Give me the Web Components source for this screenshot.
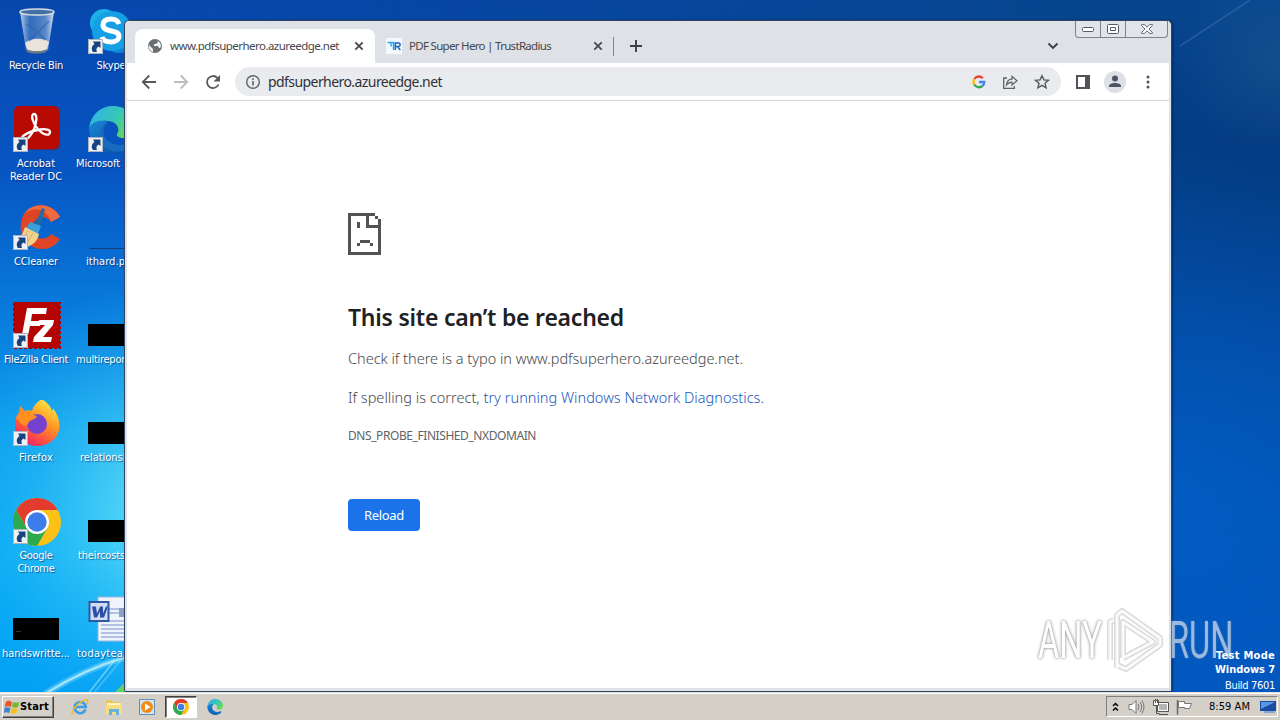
<!DOCTYPE html>
<html lang="en">
<head>
<meta charset="utf-8">
<title>Desktop</title>
<style>
  html, body { margin: 0; width: 1280px; height: 720px; overflow: hidden; }
</style>
</head>
<body>
<desk-top></desk-top>

<script>
const shortcut = `
  <svg class="arrow" width="15" height="15" viewBox="0 0 15 15">
    <path d="M0 0h15v15H0z" fill="#eef0f2"/>
    <path d="M.5.5h14v14H.5z" fill="none" stroke="#aab4c0"/>
    <path d="M5 2.500h7.500V9L10.500 7.500c-2 1-2.700 3-1.500 5.500H5c-2-3-1.500-6 1.500-8z" fill="#17427f"/>
  </svg>`;

const chromeBall = `
  <circle cx="24" cy="24" r="24" fill="#fbc116"/>
  <path d="M3.200 12A24 24 0 0 1 44.800 12H24L13.600 30z" fill="#e33b2e"/>
  <path d="M3.200 12A24 24 0 0 0 24 48L34.400 30 24 36 13.600 30z" fill="#2da94f"/>
  <circle cx="24" cy="24" r="12" fill="#fff"/>
  <circle cx="24" cy="24" r="9.700" fill="#3c7de9"/>`;

const edgeBall = `
  <defs>
    <linearGradient id="ea" x1="0" y1="0" x2="1" y2=".5"><stop offset="0" stop-color="#2fb2ee"/><stop offset=".6" stop-color="#35c6b8"/><stop offset="1" stop-color="#69d85a"/></linearGradient>
    <linearGradient id="eb" x1="0" y1="0" x2="1" y2="1"><stop offset="0" stop-color="#1887d4"/><stop offset="1" stop-color="#0c4ba1"/></linearGradient>
  </defs>
  <path d="M1 22C3 8 13 0 25 0c13 0 23 9 23 20 0 8-6 12-12 12-5 0-8-2-7-4 3-3 2-12-9-13C10 14 4 17 1 22z" fill="url(#ea)"/>
  <path d="M1 22c4-7 13-9 19-6-7 3-9 10-7 17 3 9 13 13 22 8 4-2 7-2 5 1A24 24 0 0 1 1 22z" fill="url(#eb)"/>
  <path d="M20 16c-6 5-6 13-1 18 6 6 14 6 21 3 3-1 4 1 2 4-8 7-21 6-27-2-6-7-4-19 5-23z" fill="#176cc0"/>`;

// Every drawing is kept here by name, used through <pic-ture name="...">
const pictures = {
  recycle: [48, 48, `
    <defs><linearGradient id="a"><stop offset="0" stop-color="#dfe9f2" stop-opacity=".85"/><stop offset=".3" stop-color="#5f8fc8" stop-opacity=".5"/><stop offset=".75" stop-color="#8fb2da" stop-opacity=".6"/><stop offset="1" stop-color="#eef3f8" stop-opacity=".9"/></linearGradient></defs>
    <path d="M7 4l6 38c2 3 19 3 22 0l6-38z" fill="url(#a)"/>
    <path d="M12 35c5-5 18-6 24-1l-2 7c-3 3-18 3-20 0z" fill="#e9e4da"/>
    <path d="M13 41c4 3 17 3 21 0l-1 3c-4 2-15 2-19 0z" fill="#6f7a80"/>
    <path d="M13 16l12 8-9 9M36 13l-11 11 7 8" fill="none" stroke="#2d5fae" stroke-width="2" opacity=".5"/>
    <ellipse cx="24" cy="4" rx="17" ry="3" fill="#426fa5" stroke="#d5dbe0" stroke-width="1.500"/>`],
  skype: [48, 48, `
    <circle cx="16" cy="15" r="14" fill="#1bb0e8"/><circle cx="31" cy="29" r="16" fill="#0c86d8"/>
    <circle cx="24" cy="23" r="20" fill="#159fe4"/>
    <path d="M31 16c-1-3-3-5-8-5s-8 2-8 6c0 8 16 4 16 11 0 4-4 6-8 6-5 0-8-2-9-5" fill="none" stroke="#fff" stroke-width="5"/>`],
  acrobat: [48, 48, `
    <rect x="2" y="1" width="45" height="43" rx="5" fill="#8e0d05" opacity=".5"/>
    <rect x="1" y="0" width="45" height="43" rx="5" fill="#b60a02"/>
    <path d="M10 33c5 3 12-9 13-17 1-5 0-8-2-8-4 0-1 10 4 15 6 7 12 7 12 3 0-5-17-3-27 4-1 1-1 2 0 3z" fill="none" stroke="#fff" stroke-width="2.300"/>`],
  edge: [48, 48, edgeBall],
  ccleaner: [48, 48, `
    <path d="M47 13C40-1 20-3 11 10 5 20 7 34 17 41c9 7 23 5 30-6l-9-5c-6 8-17 5-18-5-1-12 12-16 18-7z" fill="#e04427"/>
    <path d="M47 13C40-1 20-3 11 10c10-8 22-6 27 8z" fill="#f06a40"/>
    <path d="M29 4l3 1-5 17-5-2z" fill="#276a9f"/><path d="M17 18l11 4-3 8-12-6z" fill="#3b9fd8"/>
    <path d="M12 23l14 7c-1 7-7 12-13 13L1 36c7-2 9-7 11-13z" fill="#f2d18c"/>
    <path d="M15 27l-7 12M20 29l-7 12" stroke="#d8b268"/>`],
  filezilla: [48, 48, `
    <rect x="1" y="0" width="46" height="46" fill="#b50404" stroke="#a00" stroke-width="2" stroke-dasharray="3 2"/>
    <path d="M14 6h20l-1 6H19l-1 7h10l-1 5H17l-3 14H8z" fill="#fff"/>
    <path d="M26 18h15l-1 5-10 12h9l-1 5H20l1-5 11-12h-7z" fill="#fff"/>`],
  firefox: [48, 48, `
    <defs><linearGradient id="f" x1=".8" y1="0" x2=".2" y2="1"><stop offset="0" stop-color="#fff14a"/><stop offset=".4" stop-color="#ff9a22"/><stop offset=".75" stop-color="#ff4a46"/><stop offset="1" stop-color="#e3187a"/></linearGradient></defs>
    <path d="M29 0c6 4 9 8 10 12 1-1 1-2 1-3 9 12 8 25 0 32-9 8-23 8-31 0C0 33 1 21 6 13l1-6 5 5c2-1 5-1 7 0 1-5 5-9 10-12z" fill="url(#f)" transform="translate(0 -1)"/>
    <circle cx="24" cy="24" r="10" fill="#7442ce"/>
    <path d="M3 18c2-5 8-8 13-6 1 2 4 3 8 4-1 4-8 3-9 8-3 4-7 0-12-6z" fill="#ff901f"/>`],
  chrome: [48, 48, chromeBall],
  thumb: [48, 48, `<path d="M0 22h46v22H0z"/>`],
  thumbmark: [48, 48, `<path d="M0 22h46v22H0z"/><path d="M3 35.500h5" stroke="#333"/>`],
  hair: [48, 48, `<path d="M2 44.500h46" stroke="#123f78"/>`],
  word: [48, 48, `
    <path d="M10 1h38v44H10z" fill="#eef3fc"/><path d="M10 1h38v44H10z" fill="none" stroke="#9fb5dd"/>
    <path d="M20 13h28M20 17h28M13 25h35M13 29h35M13 33h35M13 37h35M13 41h35" stroke="#7590cd"/>
    <path d="M31 12h17v9H31z" fill="#8d9fc4"/>
    <path d="M1.500 6h19v19h-19z" fill="#d2ddf4" stroke="#3156a4" stroke-width="2"/>
    <path d="M4 10.500h4l1 7 3-7h3v7l3-7h2l-4 11h-4v-6l-3 6H6z" fill="#2b4fa6"/>`],
  globe: [16, 16, `<circle cx="8" cy="8" r="7" fill="#6b6e72"/>
    <path d="M9 2c1 0 2 1 2 2L9 6H7v2h4l1 2h1c2-2 1-6-4-8zM2 7l4 4v3C3 13 1 10 2 7z" fill="#f2f3f4"/>`],
  trust: [16, 16, `<path d="M0 0h16v16H0z" fill="#f4f9fe"/>
    <path d="M1.500 4.500H7.500v7.500M5 4.500v4" fill="none" stroke="#29a6ee" stroke-width="1.500"/>
    <path d="M9.300 12V5h3.200q1.700 0 1.700 1.700t-1.700 1.700H9.500M11.800 9l2.500 3" fill="none" stroke="#1766c5" stroke-width="1.500"/>`],
  close: [10, 10, `<path d="M1.300 1.300l7.400 7.400M8.700 1.300L1.300 8.700" stroke="#46494d" stroke-width="1.800"/>`],
  plus: [14, 14, `<path d="M7 1v12M1 7h12" stroke="#3c4043" stroke-width="1.900"/>`],
  down: [12, 8, `<path d="M1.500 1.500L6 6l4.500-4.500" fill="none" stroke="#3c4043" stroke-width="1.900"/>`],
  back: [16, 16, `<path d="M15 8H2M8.300 1.500L1.800 8l6.500 6.500" fill="none" stroke="#55585c" stroke-width="1.800"/>`],
  forward: [16, 16, `<path d="M1 8h13M7.700 1.500L14.200 8l-6.500 6.500" fill="none" stroke="#bbbdc0" stroke-width="1.800"/>`],
  reload: [16, 16, `<path d="M13.500 10.500A6 6 0 1 1 12.300 3.800L14 5.500" fill="none" stroke="#55585c" stroke-width="1.800"/><path d="M15 1v6.500H8.500z" fill="#55585c"/>`],
  info: [16, 16, `<circle cx="8" cy="8" r="6.300" fill="none" stroke="#5f6368" stroke-width="1.400"/><path d="M8 7v4.500M8 4.300V6" stroke="#5f6368" stroke-width="1.600"/>`],
  google: [14, 14, `<g fill="none" stroke-width="2.300"><path d="M2.400 4A5.300 5.300 0 0 1 10.800 3.200" stroke="#ea4335"/><path d="M2.300 9.600a5.300 5.300 0 0 1 0-5.500" stroke="#fbbc05"/><path d="M2.300 9.500A5.300 5.300 0 0 0 10.600 10.800" stroke="#34a853"/><path d="M7 7h5.300a5.300 5.300 0 0 1-1.800 3.900" stroke="#4285f4"/></g>`],
  share: [16, 16, `<path d="M5 4H1.700v10.300h10.600V12" fill="none" stroke="#5f6368" stroke-width="1.300"/><path d="M4.500 11C5 7 7.500 5.200 10 5.200V2.300l5 4.400-5 4.300V8.200C7.500 8.200 6 9 4.500 11z" fill="none" stroke="#5f6368" stroke-width="1.200"/>`],
  star: [16, 16, `<path d="M8 1.700l1.900 4.200 4.600.4-3.500 3 1.100 4.500L8 11.400l-4.100 2.400L5 9.300l-3.500-3 4.600-.4z" fill="none" stroke="#55585c" stroke-width="1.400"/>`],
  panel: [14, 14, `<path d="M1 1h12v12H1z" fill="none" stroke="#505357" stroke-width="2"/><path d="M9 0h5v14H9z" fill="#505357"/>`],
  person: [22, 22, `<circle cx="11" cy="11" r="11" fill="#dde0e5"/><circle cx="11" cy="7.500" r="3" fill="#4d5565"/><path d="M5 16v-1c0-4 12-4 12 0v1z" fill="#4d5565"/>`],
  dots: [4, 14, `<circle cx="2" cy="2" r="1.500" fill="#505357"/><circle cx="2" cy="7" r="1.500" fill="#505357"/><circle cx="2" cy="12" r="1.500" fill="#505357"/>`],
  sad: [33, 42, `<path shape-rendering="crispEdges" fill="#535353" d="M0 0h27v3H3v36h27V6h3v36H0zM18 0h3v15h-3zM21 12h12v3H21zM27 3h3v3h-3zM9 9h3v6H9zM12 27h10v3H12zM9 30h3v3H9zM22 30h3v3h-3z"/>`],
  min: [12, 6, `<rect x=".5" y="1.500" width="11" height="4" rx="1" fill="#fff" stroke="#555b66"/>`],
  max: [12, 10, `<rect x=".5" y=".5" width="11" height="9" rx="1" fill="#fff" stroke="#555b66"/><path d="M3.500 3.500h5v3h-5z" fill="none" stroke="#555b66"/>`],
  quit: [12, 10, `<path d="M.6.600h3L6 3.200 8.400.600h3v1L8 5l3.400 3.400v1h-3L6 6.800 3.600 9.400h-3v-1L4 5 .6 1.600z" fill="#fff" stroke="#555b66" stroke-width=".9"/>`],
  flagwin: [16, 16, `<path d="M2 3c2-2 4-1 6 0L7 8C5 7 3 7 .5 8z" fill="#e8552b"/><path d="M9 3c2 1 4 1 6.500 0L14 8c-2 1-4 1-6 0z" fill="#76b82c"/><path d="M.5 9c2-1 4-1 6 0l-1.500 5c-2-1-4-1-5 0z" fill="#3b84cf"/><path d="M7.500 9c2 1 4 1 6 0l-1 5c-3 1-5 1-6.500 0z" fill="#f6c022"/>`],
  ie: [18, 18, `<path d="M14.500 11.500A5.600 5.600 0 1 1 14.800 9H5" fill="none" stroke="#3a9fe4" stroke-width="2.600"/><path d="M1.500 16.500C-1 12 12 0 16.500 2c1 .8 0 3-1 4" fill="none" stroke="#ecba38" stroke-width="1.500"/>`],
  folder: [18, 18, `<path d="M1 2h6l1 2h8v12H1z" fill="#e8c75e"/><path d="M2 5h14v5H2z" fill="#fff4ba"/><path d="M1 7h16v9H1z" fill="#f6dc83"/><path d="M4 17v-6h10v6h-3v-3H7v3z" fill="#65b4df"/>`],
  media: [16, 16, `<path d="M.5.500h15v15H.5z" fill="#d3e4f2" stroke="#5f8fb9"/><circle cx="8" cy="8" r="6" fill="#f28c16"/><path d="M6 4.500l5.500 3.500L6 11.500z" fill="#fff"/>`],
  speaker: [18, 16, `<path d="M1 5.500h3l4-4v13l-4-4H1z" fill="#fff" stroke="#777"/><path d="M10 5q2 3 0 6M12 3q3.500 5 0 10M14 1.500q4 6.500 0 13" fill="none" stroke="#777"/>`],
  network: [16, 16, `<path d="M4.500 3.500h11v9h-11z" fill="#b5b5b5" stroke="#555"/><path d="M5.500 4.500h9v7h-9z" fill="none" stroke="#fff"/><path d="M6 15.500h9" stroke="#555"/><path d="M.5 1.500h5v5h-5z" fill="#fff" stroke="#555"/><path d="M2.500 0v4M4.500 0v4M3.500 7v7.500h3" stroke="#555" fill="none"/>`],
  flag: [17, 16, `<path d="M1.500 1v14.500" stroke="#666" stroke-width="1.500"/><path d="M2.500 2.500h6v2h7l-2 5h-5v-1h-6z" fill="#fff" stroke="#777"/>`],
  chevrons: [7, 10, `<path d="M1 4l2.500-2.500L6 4M1 8.500L3.500 6 6 8.500" fill="none" stroke="#000" stroke-width="1.500"/>`],
  screen: [16, 13, `<path d="M0 1h16v10H0z" fill="#1b4ca3"/><path d="M1 2h14L1 9z" fill="#5796e4"/><path d="M4 12h11" stroke="#8aa6d4" stroke-width="2"/>`],
  play: [60, 66, `
    <g fill="none" stroke-linejoin="round"><path d="M4 52V14l4-2M11 60V7l5-4 38 27v7L20 61l-9-4M17 50V14l30 20-30 16M20 61l34-24" stroke="#8c8c8c" stroke-opacity=".32" stroke-width="6"/>
    <path d="M4 52V14l4-2M11 60V7l5-4 38 27v7L20 61l-9-4M17 50V14l30 20-30 16" stroke="#fff" stroke-opacity=".85" stroke-width="3"/></g>`],
};

function define(tag, render) {
  customElements.define(tag, class extends HTMLElement {
    connectedCallback() {
      if (this.shadowRoot) return;
      const template = document.createElement("template");
      template.innerHTML = render(this);
      this.attachShadow({ mode: "open" }).append(template.content.cloneNode(true));
    }
  });
}

// Spaces its letters so that the line is as wide as the width attribute says
customElements.define("fit-text", class extends HTMLElement {
  connectedCallback() {
    if (this.shadowRoot) return;
    this.attachShadow({ mode: "open" }).innerHTML =
      `<style>:host { display: inline-block; white-space: nowrap; text-indent: 0; }</style><slot></slot>`;
    const width = Number(this.getAttribute("width"));
    const gap = width - this.getBoundingClientRect().width;
    this.style.letterSpacing = gap / this.textContent.length + "px";
  }
});

define("pic-ture", el => {
  const [w, h, body] = pictures[el.getAttribute("name")];
  const size = el.getAttribute("size");
  return `
    <style>:host { display: block; flex: none; } svg { display: block; }</style>
    <svg width="${size || w}" height="${size || h}" viewBox="0 0 ${w} ${h}">${body}</svg>`;
});

define("desktop-icon", el => `
  <style>
    :host { position: absolute; width: 74px; color: #fff; font: 11px/13px "DejaVu Sans Condensed", "DejaVu Sans", sans-serif; font-stretch: condensed; text-align: center; text-shadow: 1px 1px 1px rgba(0, 30, 90, .6); }
    :host([indent]) .label { text-align: left; padding-left: ${el.getAttribute("indent") || 0}px; }
    .box { position: relative; width: 48px; height: 48px; margin: 0 12px 3px 14px; }
    .arrow { position: absolute; left: 0; bottom: 2px; }
  </style>
  <div class="box">
    <pic-ture name="${el.getAttribute("icon")}"></pic-ture>
    ${el.hasAttribute("link") ? shortcut : ""}
  </div>
  <div class="label"><slot></slot></div>`);

define("wall-paper", () => `
  <style>:host { position: absolute; inset: 0 0 28px; } svg { display: block; }</style>
  <svg width="1280" height="692">
    <defs>
      <linearGradient id="l" x1="0" y1="0" x2="0" y2="1">
        <stop offset="0" stop-color="#0747ad"/><stop offset=".25" stop-color="#0756c4"/><stop offset=".45" stop-color="#087bdc"/>
        <stop offset=".62" stop-color="#0c9eed"/><stop offset=".8" stop-color="#08aaf4"/><stop offset="1" stop-color="#04a0f4"/>
      </linearGradient>
      <linearGradient id="r" x1="0" y1="0" x2="0" y2="1">
        <stop offset="0" stop-color="#07468f"/><stop offset=".2" stop-color="#033f87"/><stop offset=".45" stop-color="#034a9f"/>
        <stop offset=".75" stop-color="#0355b6"/><stop offset="1" stop-color="#0357bd"/>
      </linearGradient>
      <linearGradient id="m" x1="0" x2="1"><stop offset=".1" stop-color="#fff"/><stop offset=".85" stop-color="#000"/></linearGradient>
      <mask id="k"><path d="M0 0h1280v692H0z" fill="url(#m)"/></mask>
      <radialGradient id="g" gradientUnits="userSpaceOnUse" cx="175" cy="510" r="230"><stop offset="0" stop-color="#7cf0f8" stop-opacity=".9"/><stop offset="1" stop-color="#20b8f8" stop-opacity="0"/></radialGradient>
      <radialGradient id="b" gradientUnits="userSpaceOnUse" cx="1172" cy="500" r="330"><stop offset="0" stop-color="#0064d0" stop-opacity=".5"/><stop offset="1" stop-color="#0058c0" stop-opacity="0"/></radialGradient>
      <radialGradient id="n" gradientUnits="userSpaceOnUse" cx="1290" cy="150" r="200"><stop offset="0" stop-color="#002a68" stop-opacity=".2"/><stop offset="1" stop-color="#002a68" stop-opacity="0"/></radialGradient>
      <radialGradient id="t"><stop offset="0" stop-color="#286295" stop-opacity=".4"/><stop offset="1" stop-color="#286295" stop-opacity="0"/></radialGradient>
    </defs>
    <path d="M0 0h1280v692H0z" fill="url(#r)"/>
    <path d="M0 0h1280v692H0z" fill="url(#l)" mask="url(#k)"/>
    <path d="M0 200h400v492H0z" fill="url(#g)"/>
    <path d="M1100 0h180v692h-180z" fill="url(#b)"/>
    <path d="M1100 0h180v692h-180z" fill="url(#n)"/>
    <circle cx="1280" cy="60" r="100" fill="url(#t)"/>
    <path d="M1180 46L1250 0" stroke="#5f91bd" stroke-width="1.500" opacity=".3"/>
    <g fill="none" stroke="#c9f6ff">
      <path d="M45 694Q82 670 126 657" stroke-width="7" opacity=".25"/><path d="M45 694Q82 670 126 657" stroke-width="2.500" opacity=".7"/>
      <path d="M88 694L114 661" stroke-width="1.500" opacity=".5"/><path d="M93 694L121 660" stroke-width="1.500" opacity=".3"/>
    </g>
    <path d="M115 692l10-10v10z" fill="#5fd26c"/>
  </svg>`);

define("browser-tab", el => `
  <style>
    :host { display: flex; align-items: center; box-sizing: border-box; width: 240px; height: 34px; padding: 0 11px 0 12px; color: #45484c; font: 11.500px/16px "Noto Sans", sans-serif; }
    :host([active]) { background: #fff; border-radius: 8px 8px 0 0; }
    .title { flex: 1; margin-left: 7px; }
  </style>
  <pic-ture name="${el.getAttribute("icon")}"></pic-ture>
  <div class="title"><slot></slot></div>
  <pic-ture name="close"></pic-ture>`);

define("tab-strip", () => `
  <style>
    :host { display: flex; align-items: flex-end; height: 42px; padding-left: 8px; background: #dee1e6; position: relative; }
    .second { margin-left: -1px; }
    .rule { width: 1px; height: 19px; margin: 0 0 7px -1px; background: #83868b; }
    .new { margin: 0 0 10px 15px; }
    .list { margin: 0 110px 13px auto; }
    .buttons { position: absolute; top: 0; right: 1px; display: flex; height: 16px; border: 1px solid #7d838e; border-top: 0; border-radius: 0 0 4px 4px; background: #e1e4ea; }
    .buttons div { display: flex; align-items: center; justify-content: center; width: 24px; border-right: 1px solid #7d838e; }
    .buttons div:last-child { width: 41px; border: 0; }
  </style>
  <browser-tab active icon="globe"><fit-text width="169">www.pdfsuperhero.azureedge.net</fit-text></browser-tab>
  <browser-tab class="second" icon="trust"><fit-text width="142">PDF Super Hero | TrustRadius</fit-text></browser-tab>
  <div class="rule"></div>
  <pic-ture class="new" name="plus"></pic-ture>
  <pic-ture class="list" name="down"></pic-ture>
  <div class="buttons">
    <div><pic-ture name="min"></pic-ture></div>
    <div><pic-ture name="max"></pic-ture></div>
    <div><pic-ture name="quit"></pic-ture></div>
  </div>`);

define("tool-bar", () => `
  <style>
    :host { display: flex; align-items: center; height: 37px; padding: 0 19px 0 14px; background: #fff; border-bottom: 1px solid #d5d7da; }
    .nav { display: flex; gap: 16px; }
    .field { flex: 1; display: flex; align-items: center; height: 29px; margin: 0 15px 0 14px; padding: 0 11px 0 10px; border-radius: 15px; background: #e9ebee; color: #303236; font: 14px/20px "Noto Sans", sans-serif; }
    .field fit-text { margin: 0 auto 0 7px; }
    .tools { display: flex; align-items: center; gap: 16px; }
    .right { display: flex; align-items: center; gap: 14px; }
    .right pic-ture:last-child { margin-left: 6px; }
  </style>
  <div class="nav"><pic-ture name="back"></pic-ture><pic-ture name="forward"></pic-ture><pic-ture name="reload"></pic-ture></div>
  <div class="field">
    <pic-ture name="info"></pic-ture>
    <fit-text width="174">pdfsuperhero.azureedge.net</fit-text>
    <div class="tools"><pic-ture name="google"></pic-ture><pic-ture name="share"></pic-ture><pic-ture name="star"></pic-ture></div>
  </div>
  <div class="right"><pic-ture name="panel"></pic-ture><pic-ture name="person"></pic-ture><pic-ture name="dots"></pic-ture></div>`);

define("error-page", () => `
  <style>
    :host { display: block; flex: 1; padding: 112px 0 0 221px; background: #fff; color: #45484c; font: 14.500px/20px "Noto Sans", sans-serif; font-weight: 300; }
    h1 { margin: 46px 0 0; color: #202124; font: 600 23px/32px "Noto Sans", sans-serif; }
    p { margin: 0; }
    .typo { margin-top: 15px; }
    .spell { margin-top: 19px; }
    .code { margin-top: 19px; font-size: 12px; color: #5f6368; font-weight: 400; }
    a { color: #1558c0; }
    button { display: block; width: 72px; height: 32px; margin-top: 53px; padding: 0; border: 0; border-radius: 4px; background: #1a73e8; color: #fff; font: 13px/32px "Noto Sans", sans-serif; }
  </style>
  <pic-ture name="sad"></pic-ture>
  <h1><fit-text width="276">This site can’t be reached</fit-text></h1>
  <p class="typo"><fit-text width="395">Check if there is a typo in www.pdfsuperhero.azureedge.net.</fit-text></p>
  <p class="spell"><fit-text width="416">If spelling is correct, <a>try running Windows Network Diagnostics</a>.</fit-text></p>
  <p class="code"><fit-text width="188">DNS_PROBE_FINISHED_NXDOMAIN</fit-text></p>
  <button><fit-text width="40">Reload</fit-text></button>`);

define("browser-window", () => `
  <style>
    :host { position: absolute; left: 124px; top: 20px; display: flex; flex-direction: column; box-sizing: border-box; width: 1048px; height: 672px; padding: 0 2px 3px; border: 1px solid #33465f; border-radius: 5px 5px 2px 2px; background: #dfe2e7; box-shadow: 1px 0 2px rgba(0, 20, 60, .5); }
  </style>
  <tab-strip></tab-strip>
  <tool-bar></tool-bar>
  <error-page></error-page>`);

define("water-mark", () => `
  <style>
    :host { position: absolute; left: 1038px; top: 608px; display: flex; align-items: center; width: 194px; height: 66px; font: 400 51px/68px Roboto, sans-serif; }
    span { display: block; flex: none; transform-origin: 0 50%; }
    .any { width: 68px; transform: scaleX(.64); color: #fff; text-shadow: 0 0 4px #999, 0 0 3px #aaa; }
    .run { width: 62px; margin-left: 3px; transform: scaleX(.64); color: rgba(205, 222, 243, .68); text-shadow: 0 0 3px rgba(120, 140, 170, .5); }
  </style>
  <span class="any">ANY</span><pic-ture name="play"></pic-ture><span class="run">RUN</span>`);

define("build-label", () => `
  <style>
    :host { position: absolute; right: 5px; bottom: 27px; display: flex; flex-direction: column; align-items: flex-end; color: #fff; font: 11px/14px "DejaVu Sans Condensed", "DejaVu Sans", sans-serif; font-stretch: condensed; }
    .build { margin-top: 2px; }
  </style>
  <b><fit-text width="59">Test Mode</fit-text></b>
  <b><fit-text width="60">Windows 7</fit-text></b>
  <fit-text class="build" width="50">Build 7601</fit-text>`);

define("task-bar", () => `
  <style>
    :host { position: absolute; inset: auto 0 0; display: flex; align-items: center; box-sizing: border-box; height: 28px; padding: 2px; background: #d4d0c8; border-top: 1px solid #e4e1dc; box-shadow: inset 0 1px #fff; color: #000; font: 11px/14px "DejaVu Sans Condensed", "DejaVu Sans", sans-serif; font-stretch: condensed; }
    .start { display: flex; align-items: center; box-sizing: border-box; width: 52px; height: 22px; padding-left: 1px; border: 1px solid; border-color: #fff #404040 #404040 #fff; box-shadow: inset -1px -1px #808080; font-weight: bold; }
    .apps { display: flex; align-items: center; margin-left: 17px; gap: 16px; }
    .open { display: flex; align-items: center; justify-content: center; box-sizing: border-box; width: 32px; height: 22px; margin: 0 -6px; border: 1px solid; border-color: #404040 #fff #fff #404040; box-shadow: inset 1px 1px #808080; background: #fff; }
    .tray { display: flex; align-items: center; box-sizing: border-box; width: 172px; height: 21px; margin-left: auto; padding: 0 1px 0 5px; border: 1px solid; border-color: #808080 #fff #fff #808080; }
    .tray fit-text { margin: 0 10px 0 16px; }
  </style>
  <div class="start"><pic-ture name="flagwin"></pic-ture><fit-text width="29">Start</fit-text></div>
  <div class="apps">
    <pic-ture name="ie"></pic-ture>
    <pic-ture name="folder"></pic-ture>
    <pic-ture name="media"></pic-ture>
    <div class="open"><pic-ture name="chrome" size="16"></pic-ture></div>
    <pic-ture name="edge" size="16"></pic-ture>
  </div>
  <div class="tray">
    <pic-ture name="chevrons"></pic-ture>
    <pic-ture name="speaker" style="margin-left:9px"></pic-ture>
    <pic-ture name="network" style="margin-left:7px"></pic-ture>
    <pic-ture name="flag" style="margin-left:7px"></pic-ture>
    <fit-text width="41">8:59 AM</fit-text>
    <pic-ture name="screen"></pic-ture>
  </div>`);

define("desk-top", () => `
  <style>
    :host { display: block; position: relative; width: 1280px; height: 720px; overflow: hidden; }
  </style>
  <wall-paper></wall-paper>
  <desktop-icon style="left:-1px;top:8px" icon="recycle"><fit-text width="54">Recycle Bin</fit-text></desktop-icon>
  <desktop-icon style="left:-1px;top:106px" icon="acrobat" link><fit-text width="38">Acrobat</fit-text><br><fit-text width="52">Reader DC</fit-text></desktop-icon>
  <desktop-icon style="left:-1px;top:204px" icon="ccleaner" link><fit-text width="44">CCleaner</fit-text></desktop-icon>
  <desktop-icon style="left:-1px;top:302px" icon="filezilla" link><fit-text width="64">FileZilla Client</fit-text></desktop-icon>
  <desktop-icon style="left:-1px;top:400px" icon="firefox" link><fit-text width="34">Firefox</fit-text></desktop-icon>
  <desktop-icon style="left:-1px;top:498px" icon="chrome" link><fit-text width="33">Google</fit-text><br><fit-text width="37">Chrome</fit-text></desktop-icon>
  <desktop-icon style="left:-1px;top:596px" icon="thumbmark"><fit-text width="68">handswritte...</fit-text></desktop-icon>
  <desktop-icon style="left:74px;top:8px" icon="skype" link><fit-text width="29">Skype</fit-text></desktop-icon>
  <desktop-icon style="left:74px;top:106px" indent="2" icon="edge" link><fit-text width="44">Microsoft</fit-text></desktop-icon>
  <desktop-icon style="left:74px;top:204px" indent="12" icon="hair"><fit-text width="39">ithard.p</fit-text></desktop-icon>
  <desktop-icon style="left:74px;top:302px" indent="2" icon="thumb"><fit-text width="49">multirepor</fit-text></desktop-icon>
  <desktop-icon style="left:74px;top:400px" indent="6" icon="thumb"><fit-text width="49">relationsh</fit-text></desktop-icon>
  <desktop-icon style="left:74px;top:498px" indent="4" icon="thumb"><fit-text width="47">theircosts</fit-text></desktop-icon>
  <desktop-icon style="left:74px;top:596px" indent="3" icon="word"><fit-text width="46">todaytea</fit-text></desktop-icon>
  <browser-window></browser-window>
  <water-mark></water-mark>
  <build-label></build-label>
  <task-bar></task-bar>`);
</script>
</body>
</html>
